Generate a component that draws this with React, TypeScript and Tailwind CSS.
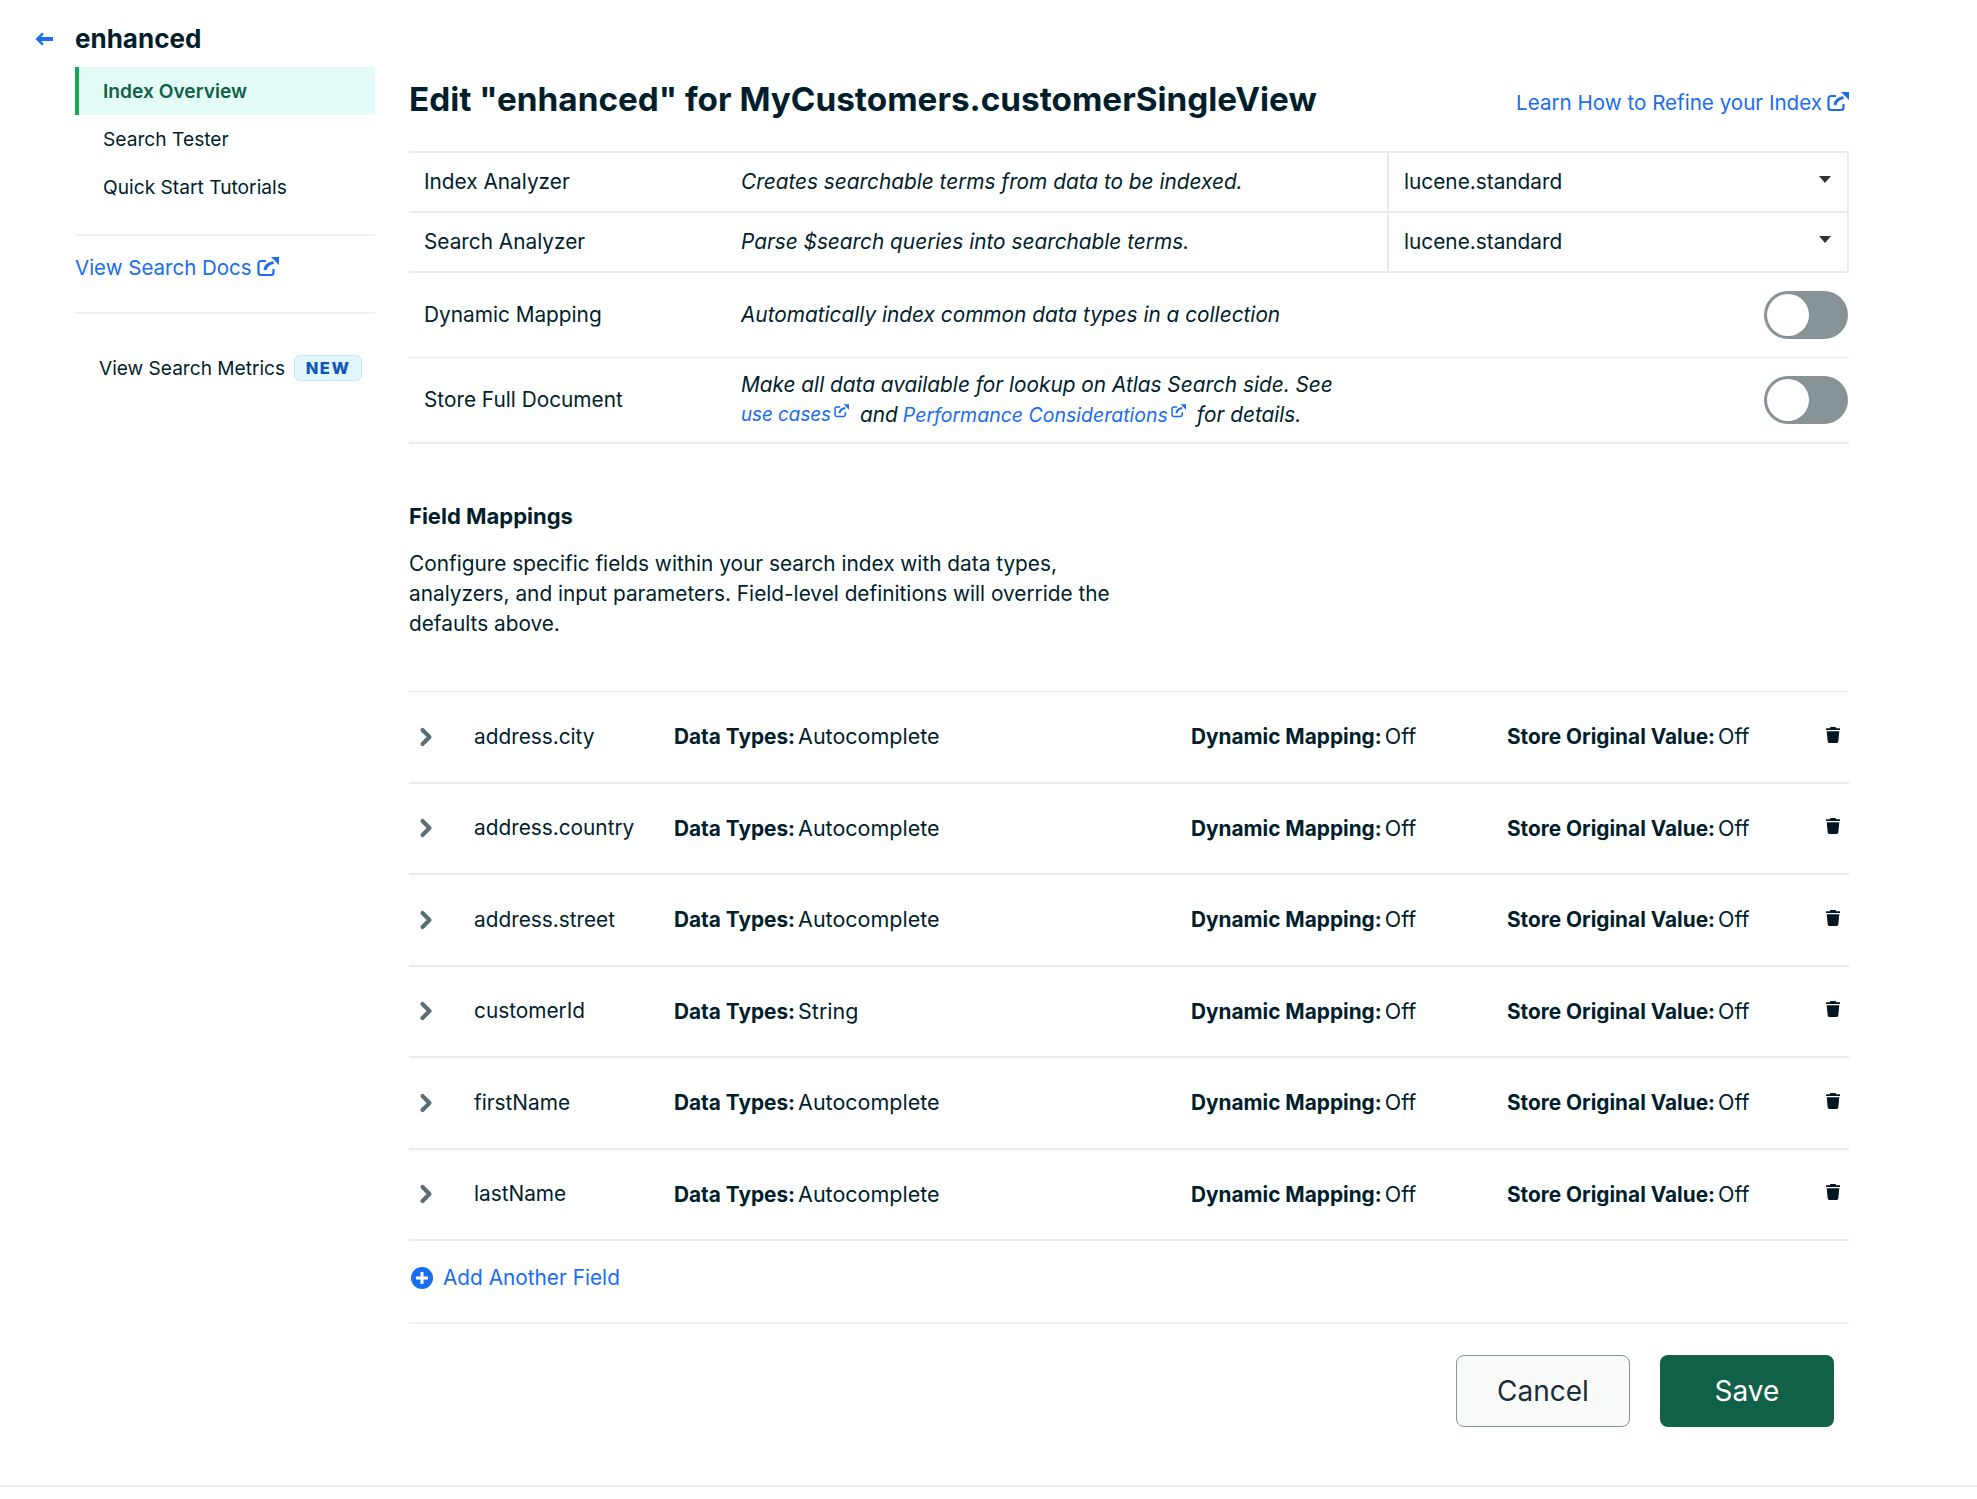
import { ChevronRight } from 'lucide-react';

const BLUE = 'text-[#1a6cf0]';

const fields = [
  { name: 'address.city', type: 'Autocomplete' },
  { name: 'address.country', type: 'Autocomplete' },
  { name: 'address.street', type: 'Autocomplete' },
  { name: 'customerId', type: 'String' },
  { name: 'firstName', type: 'Autocomplete' },
  { name: 'lastName', type: 'Autocomplete' },
];

// Box with an arrow leaving the top right corner
function ExternalIcon({ className }: { className: string }) {
  return (
    <svg viewBox="0 0 22 20" className={className} fill="none" aria-hidden="true">
      <path d="M9 4H4a2.500 2.500 0 0 0-2.500 2.500v9A2.500 2.500 0 0 0 4 18h10a2.500 2.500 0 0 0 2.500-2.500V12" stroke="currentColor" strokeWidth="2.200" />
      <path d="M8 13c.5-3.500 3-6.500 8.500-7.500" stroke="currentColor" strokeWidth="3" />
      <path d="M14 0H22v8z" fill="currentColor" />
    </svg>
  );
}

function TrashIcon() {
  return (
    <svg viewBox="0 0 14 16" className="h-4 w-[14px] text-[#061621]" aria-hidden="true">
      <path d="M4.500 0h5l.7 1.200H13.500a.5.5 0 0 1 .5.500V3H0V1.700a.5.5 0 0 1 .5-.5h3.300z" fill="currentColor" />
      <path d="M.7 4.200h12.600l-1 10.400a1.500 1.500 0 0 1-1.500 1.400H3.200a1.500 1.500 0 0 1-1.500-1.400z" fill="currentColor" />
    </svg>
  );
}

function Toggle() {
  return (
    <div className="mr-[1px] flex h-[48px] w-[84px] items-center rounded-full bg-[#889397] pl-[3px]">
      <div className="h-[42px] w-[42px] rounded-full bg-white" />
    </div>
  );
}

function Caret() {
  return <div className="h-0 w-0 border-x-[6px] border-t-[7px] border-x-transparent border-t-[#333333]" />;
}

function AnalyzerRow({ label, description }: { label: string; description: string }) {
  return (
    <div className="flex h-[60px] border-b-2 border-[#e8edeb]">
      <div className="flex w-[332px] items-center pl-[15px]">{label}</div>
      <div className="flex w-[646px] items-center italic">{description}</div>
      <div className="flex flex-1 items-center justify-between border-x-2 border-[#e8edeb] pl-[15px] pr-[16px]">
        <span>lucene.standard</span>
        <div className="mb-[6px]">
          <Caret />
        </div>
      </div>
    </div>
  );
}

function FieldRow({ name, type }: { name: string; type: string }) {
  return (
    <div className="grid h-[91.5px] grid-cols-[65px_200px_517px_316px_1fr_40px] items-center border-b-2 border-[#e8edeb]">
      <ChevronRight className="ml-[3px] h-7 w-7 text-[#5c6c75]" strokeWidth={3.500} />
      <span>{name}</span>
      <span className="text-[21.500px]"><b className="-mr-[3px] text-[20.800px] font-bold">Data Types:</b> {type}</span>
      <span className="text-[21.500px]"><b className="-mr-[3px] text-[20.800px] font-bold">Dynamic Mapping:</b> Off</span>
      <span className="text-[21.500px]"><b className="-mr-[3px] text-[20.800px] font-bold">Store Original Value:</b> Off</span>
      <div className="mb-[4px] flex justify-center pl-[8px]">
        <TrashIcon />
      </div>
    </div>
  );
}

export default function App() {
  return (
    <div className="min-h-[1499px] bg-white font-['Inter',sans-serif] text-[20.800px] leading-[30px] text-[#001e2b]">
      <div className="flex">
        {/* Sidebar */}
        <aside className="ml-[35px] w-[340px] shrink-0 pt-[21px]">
          <div className="flex h-[36px] items-center">
            <svg viewBox="0 0 18 14" className="h-[14px] w-[18px] text-[#1a6cf0]" aria-hidden="true">
              <path d="M7 0.500 0.500 7 7 13.500l1.800-1.800L6 9h12V5H6l2.800-2.700z" fill="currentColor" />
            </svg>
            <span className="ml-[22px] text-[26px] font-bold leading-[36px]">enhanced</span>
          </div>
          <div className="ml-[40px] mt-[10px]">
            <nav className="border-b-2 border-[#edf0ef] pb-[23px] text-[19.200px]">
              <div className="flex h-[48px] items-center border-l-4 border-[#13aa52] bg-[#e3fcf7] pl-[24px] font-semibold text-[#116149]">Index Overview</div>
              <div className="flex h-[48px] items-center pl-[28px]">Search Tester</div>
              <div className="flex h-[48px] items-center pl-[28px]">Quick Start Tutorials</div>
            </nav>
            <div className="flex h-[78px] items-center gap-[5px] border-b-2 border-[#edf0ef] pb-[12px] text-[20.500px]">
              <span className={BLUE}>View Search Docs</span>
              <ExternalIcon className={`mb-[2px] h-[20px] w-[22px] ${BLUE}`} />
            </div>
            <div className="mt-[39px] flex items-center pl-[24px] text-[19.100px]">
              <span>View Search Metrics</span>
              <span className="ml-[9px] flex h-[26px] w-[68px] items-center justify-center rounded-[6px] border border-[#c3e7fe] bg-[#e1f7ff] text-[16.500px] font-extrabold tracking-[1.500px] text-[#1254b7]">NEW</span>
            </div>
          </div>
        </aside>

        {/* Main column */}
        <main className="ml-[34px] w-[1440px] pt-[76px]">
          <div className="flex h-[48px] items-center justify-between">
            <h1 className="-mt-[2px] text-[33.300px] font-bold leading-[48px]">Edit "enhanced" for MyCustomers.customerSingleView</h1>
            <div className="mt-[6px] flex items-center gap-[5px] text-[20.600px]">
              <span className={BLUE}>Learn How to Refine your Index</span>
              <ExternalIcon className={`mb-[2px] h-[20px] w-[22px] ${BLUE}`} />
            </div>
          </div>

          <section className="mt-[27px] border-t-2 border-[#e8edeb]">
            <AnalyzerRow label="Index Analyzer" description="Creates searchable terms from data to be indexed." />
            <AnalyzerRow label="Search Analyzer" description="Parse $search queries into searchable terms." />
            <div className="flex h-[85px] items-center border-b border-[#e8edeb]">
              <div className="w-[332px] pl-[15px]">Dynamic Mapping</div>
              <div className="flex-1 italic">Automatically index common data types in a collection</div>
              <Toggle />
            </div>
            <div className="flex h-[86px] items-center border-b-2 border-[#e8edeb]">
              <div className="w-[332px] pl-[15px]">Store Full Document</div>
              <div className="flex-1 italic">
                <div>Make all data available for lookup on Atlas Search side. See</div>
                <div className="flex items-center">
                  <span className={`text-[18.800px] ${BLUE}`}>use cases</span>
                  <ExternalIcon className={`mb-[8px] ml-[3px] h-[14px] w-[15px] ${BLUE}`} />
                  <span className="ml-[11px]">and</span>
                  <span className={`ml-[5px] text-[19.500px] ${BLUE}`}>Performance Considerations</span>
                  <ExternalIcon className={`mb-[8px] ml-[3px] h-[14px] w-[15px] ${BLUE}`} />
                  <span className="ml-[11px]">for details.</span>
                </div>
              </div>
              <Toggle />
            </div>
          </section>

          <h2 className="mt-[57px] text-[22px] font-bold">Field Mappings</h2>
          <p className="mt-[18px] w-[720px]">
            Configure specific fields within your search index with data types, analyzers, and input parameters. Field-level definitions will override the defaults above.
          </p>

          <section className="mt-[52px] border-t border-[#e8edeb]">
            {fields.map((field) => (
              <FieldRow key={field.name} name={field.name} type={field.type} />
            ))}
          </section>

          <div className="flex h-[83px] items-center gap-[10px] border-b-2 border-[#edf0ef] pb-[8px] pl-[2px]">
            <svg viewBox="0 0 22 22" className="h-[22px] w-[22px] text-[#1a6cf0]" aria-hidden="true">
              <circle cx="11" cy="11" r="11" fill="currentColor" />
              <path d="M9.500 5h3v4.500H17v3h-4.500V17h-3v-4.500H5v-3h4.500z" fill="white" />
            </svg>
            <span className={BLUE}>Add Another Field</span>
          </div>

          <div className="mt-[31px] flex justify-end gap-[30px] pr-[15px] text-[28px]">
            <button type="button" className="h-[72px] w-[174px] rounded-[8px] border border-[#889397] bg-[#f9fbfa] text-[#1c2d38]">Cancel</button>
            <button type="button" className="h-[72px] w-[174px] rounded-[8px] bg-[#116149] text-white">Save</button>
          </div>
        </main>
      </div>
      <div className="mt-[58px] border-t-2 border-[#edf0ef]" />
    </div>
  );
}
